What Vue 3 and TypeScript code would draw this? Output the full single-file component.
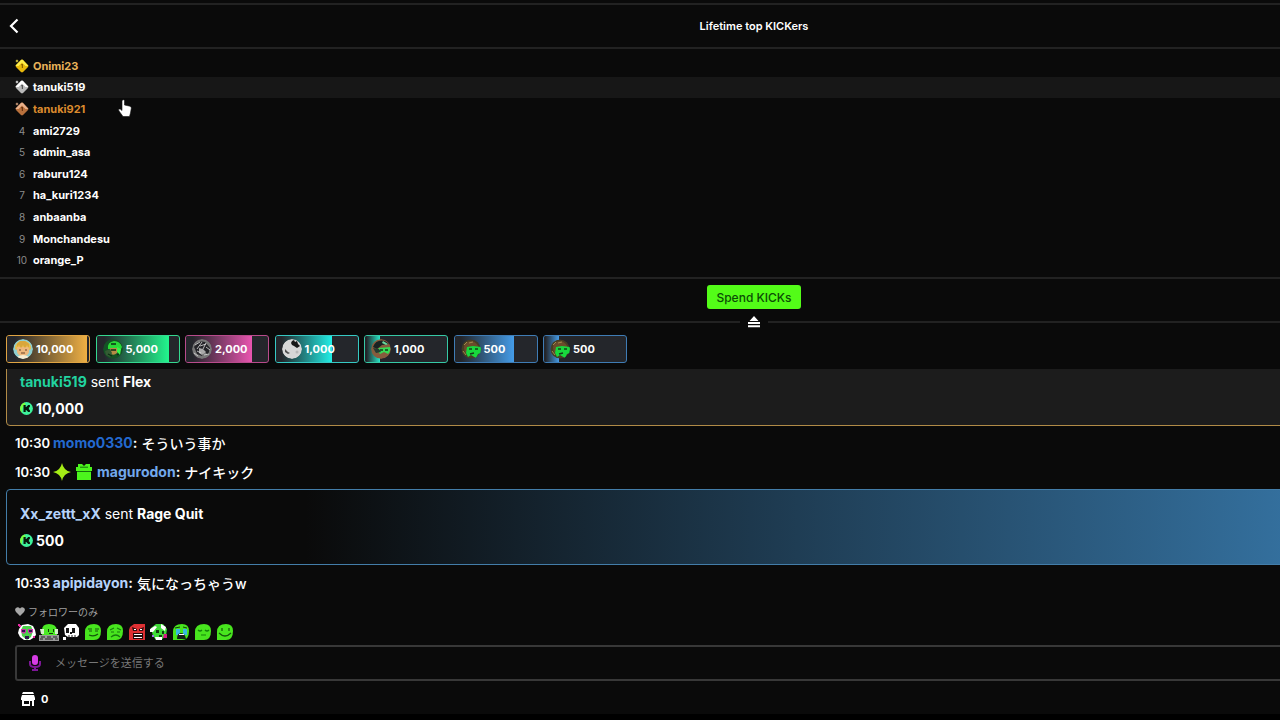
<script setup lang="ts">
import { ref } from 'vue'

interface Kicker { name: string; tone?: 'gold' | 'silver' | 'bronze' }
interface Gift { amount: string; tone: string; fill: number; avatar: string }

const kickers: Kicker[] = [
  { name: 'Onimi23', tone: 'gold' },
  { name: 'tanuki519', tone: 'silver' },
  { name: 'tanuki921', tone: 'bronze' },
  { name: 'ami2729' },
  { name: 'admin_asa' },
  { name: 'raburu124' },
  { name: 'ha_kuri1234' },
  { name: 'anbaanba' },
  { name: 'Monchandesu' },
  { name: 'orange_P' },
]

const medals: Record<string, string[]> = {
  gold: ['#ffee4a', '#e9b90c', '#8a6400'],
  silver: ['#ffffff', '#b9b9b9', '#555555'],
  bronze: ['#e9b08a', '#b8703c', '#6b3512'],
}

const gifts: Gift[] = [
  { amount: '10,000', tone: 'amber', fill: 97, avatar: 'blond' },
  { amount: '5,000', tone: 'green', fill: 88, avatar: 'visor' },
  { amount: '2,000', tone: 'pink', fill: 80, avatar: 'mono' },
  { amount: '1,000', tone: 'cyan', fill: 69, avatar: 'moon' },
  { amount: '1,000', tone: 'teal', fill: 18, avatar: 'cap' },
  { amount: '500', tone: 'blue', fill: 72, avatar: 'wild' },
  { amount: '500', tone: 'blue', fill: 18, avatar: 'wild' },
]

const emotes = ['love', 'typing', 'skull', 'smug', 'sad', 'rage', 'party', 'cry', 'calm', 'smile']
const message = ref('')
</script>

<template>
  <main class="panel">
    <header class="top">
      <button class="back" type="button" aria-label="Back">
        <svg viewBox="0 0 10 16" width="10" height="16"><path d="M8.500 1.500 2 8l6.500 6.500" fill="none" stroke="#fff" stroke-width="2.200" /></svg>
      </button>
      <h1>Lifetime top KICKers</h1>
    </header>

    <ol class="ranks">
      <li v-for="(k, i) in kickers" :key="k.name" :class="[k.tone, { hovered: i === 1 }]">
        <span class="place">
          <svg v-if="k.tone" viewBox="0 0 14 14" width="14" height="14">
            <path d="M7 .5q.6 0 1 .5l5 5q.8 1 0 2l-5 5q-1 .8-2 0L1 8Q.2 7 1 6l5-5q.5-.5 1-.5" :fill="medals[k.tone][1]" />
            <path d="M7 .5q.6 0 1 .5l5.400 6H10.500L7 3.500 3.500 7H.6Q.6 6.400 1 6l5-5q.5-.5 1-.5" :fill="medals[k.tone][0]" />
            <path d="M6.200 5h1.800v4H6.800V6.200h-.6z" :fill="medals[k.tone][2]" />
            <path d="m2 .2.6 1.200 1.200.6-1.200.6L2 3.800l-.6-1.200L.2 2l1.200-.6z" :fill="medals[k.tone][0]" />
          </svg>
          <template v-else>{{ i + 1 }}</template>
        </span>
        <a href="#">{{ k.name }}</a>
      </li>
    </ol>

    <section class="spend">
      <button class="spend-button" type="button">Spend KICKs</button>
      <div class="divider">
        <button class="collapse" type="button" aria-label="Collapse">
          <svg viewBox="0 0 14 12" width="14" height="12"><path d="M7 0 11.500 5h-9zM1 6h12v2H1zM1 9.300h12v2H1z" fill="#fff" /></svg>
        </button>
      </div>
    </section>

    <div class="gifts">
      <button v-for="(g, i) in gifts" :key="i" type="button" class="gift" :class="g.tone">
        <span class="fill" :style="{ width: g.fill + '%' }"></span>
        <svg class="avatar" viewBox="0 0 20 20" width="20" height="20">
          <g v-if="g.avatar === 'blond'">
            <circle cx="10" cy="10" r="10" fill="#8fcfd0" />
            <path d="M2 10q0-8 8-8t8 8l-2 1H4z" fill="#e9bd4c" />
            <path d="M4 8h12v5q-1 4-6 4t-6-4z" fill="#eeb87c" />
            <path d="m4 8 2-2 2 3 2-3 2 3 2-3 2 3V5l-4-3H7L4 5z" fill="#d9a63b" />
            <path d="M6 11h2M12 11h2M8 14h4" stroke="#6b4528" stroke-width="1.200" />
            <path d="M4 18q6-4 12 0-6 4-12 0" fill="#f8ebcf" />
          </g>
          <g v-else-if="g.avatar === 'visor'">
            <circle cx="10" cy="10" r="10" fill="#145225" />
            <path d="M5 10Q4 3 11 2q6 0 8 6l-2 4-6-2z" fill="#29da37" />
            <path d="M7 9h7v5q-3 3-6 1z" fill="#b58b45" />
            <path d="m2 12 5-2 2 4-2 4-4-2z" fill="#345b33" />
            <path d="m14 8 4 2-1 6-3-3z" fill="#36f449" />
            <path d="M8 5h5M8 11h5M5 15l4 2M14 16l2-1" stroke="#0a3014" stroke-width="1.300" />
          </g>
          <g v-else-if="g.avatar === 'mono'">
            <circle cx="10" cy="10" r="10" fill="#777" />
            <path d="M2 8Q6 1 13 3l5 6-2 7-4-4-2 5-5-2-2-5z" fill="#242428" />
            <path d="m7 9 4 1 3 3-4 3-3-2z" fill="#aaa" />
            <path d="M3 6 8 3M8 7l6-2M14 8l4 3M5 12l4 2M2 14l4 3M12 16l5-1M10 3l-5 7M14 4l-3 6" stroke="#ddd" stroke-width=".8" />
          </g>
          <g v-else-if="g.avatar === 'moon'">
            <circle cx="10" cy="10" r="10" fill="#d7d7d7" />
            <path d="m10 2 2-1 1 2 2-1 1 3 2 2-3 2-3-2-2-1-1-2z" fill="#171717" />
            <path d="m3 10 3 3 2 1-2 1-3-2z" fill="#4d4d4d" />
            <circle cx="15" cy="13" r="1.500" fill="#b8b8b8" />
          </g>
          <g v-else-if="g.avatar === 'cap'">
            <circle cx="10" cy="10" r="10" fill="#865c3d" />
            <path d="M2 8Q5 0 14 2l4 3-7 1-5 4z" fill="#192322" />
            <path d="m12 2 5 3-2 1-4-2z" fill="#68d79d" />
            <path d="m8 9 11-1q1 4-2 7l-4-2-4 2-3-4z" fill="#36dc55" />
            <path d="m2 9 6 1 2 3-5 1z" fill="#243b31" />
            <path d="M9 11h3M14 11h3" stroke="#143a1a" stroke-width="1.500" />
          </g>
          <g v-else>
            <circle cx="10" cy="10" r="9.500" fill="#453e24" />
            <path d="M3 9Q3 2 11 2q6 2 7 8l-5-2-5 2-4 4z" fill="#6a4b2a" />
            <path d="m6 8 6-1 8 1v6l-3 1-2 4-5-3-3 2-2-4z" fill="#18d83d" />
            <path d="M8 10h3M14 10h3M9 15l4-1" stroke="#143c18" stroke-width="1.400" />
            <path d="m3 6 3-3M8 4l4-1M2 12l3 4" stroke="#a18a4c" />
          </g>
        </svg>
        <span class="amount">{{ g.amount }}</span>
      </button>
    </div>

    <section class="chat">
      <article class="card flex">
        <p><a class="c-mint" href="#">tanuki519</a> sent <b>Flex</b></p>
        <p class="kicks">
          <svg viewBox="0 0 13 13" width="13" height="13"><circle cx="6.500" cy="6.500" r="6.400" fill="#3df29b" /><path d="M1.500 10.500a6.400 6.400 0 0 1 3-10l1 2-3 3z" fill="#7cff3e" /><path d="M3.500 3h2.200v2h1V4h1V3h2.200v2.200h-1v2.600h1V10H7.700V9h-1V8h-1v2H3.500z" fill="#06170b" /></svg>
          <b>10,000</b>
        </p>
      </article>
      <p class="line"><time>10:30</time> <a class="c-royal" href="#">momo0330</a><b>:</b> <span>そういう事か</span></p>
      <p class="line">
        <time>10:30</time>
        <svg class="badge star" viewBox="0 0 18 18" width="18" height="18"><path d="M9 0q1.500 7.500 9 9-7.500 1.500-9 9-1.500-7.500-9-9 7.500-1.500 9-9" fill="#a5ed16" /></svg>
        <svg class="badge" viewBox="0 0 16 16" width="16" height="16"><path d="M2 0h4l2 2 2-2h4v3h2v4H0V3h2zM1 8h14v8H1z" fill="#4cf51d" /><path d="M1 7.500h14M4 3.200h8" stroke="#176e0d" /></svg>
        <a class="c-sky" href="#">magurodon</a><b>:</b> <span>ナイキック</span>
      </p>
      <article class="card rage">
        <p><a class="c-ice" href="#">Xx_zettt_xX</a> sent <b>Rage Quit</b></p>
        <p class="kicks">
          <svg viewBox="0 0 13 13" width="13" height="13"><circle cx="6.500" cy="6.500" r="6.400" fill="#3df29b" /><path d="M1.500 10.500a6.400 6.400 0 0 1 3-10l1 2-3 3z" fill="#7cff3e" /><path d="M3.500 3h2.200v2h1V4h1V3h2.200v2.200h-1v2.600h1V10H7.700V9h-1V8h-1v2H3.500z" fill="#06170b" /></svg>
          <b>500</b>
        </p>
      </article>
      <p class="line"><time>10:33</time> <a class="c-ice" href="#">apipidayon</a><b>:</b> <span>気になっちゃうw</span></p>
    </section>

    <footer class="composer">
      <p class="mode">
        <svg viewBox="0 0 10 9" width="10" height="9"><path d="M5 9 1 5Q-.8 2.500 1 1 3-.7 5 1.500 7-.7 9 1q1.800 1.500 0 4z" fill="#a7a7a7" /></svg>
        フォロワーのみ
      </p>
      <div class="emotes">
        <button v-for="e in emotes" :key="e" type="button" :aria-label="e">
          <svg viewBox="0 0 20 18" width="20" height="18">
            <g v-if="e === 'love'">
              <path d="M2 6 5 2l6-1 5 2 2 4 1 5-3 3-3 2H7l-4-3-2-4z" fill="#fff" />
              <path d="M6 3h8l2 5-2 6-4 3-5-4-1-6z" fill="#4bd24a" />
              <path d="M4 6h5v3l-2 2-3-2zM11 6h5v3l-3 2-2-2z" fill="#ce32ab" />
              <path d="M5 7h3v2H5zM12 7h3v2h-3zM8 13h4v3H8z" fill="#2d174a" />
              <path d="M1 1h2v1h1v2H2V3H1zM16 13h2v2h-2z" fill="#e72aa2" />
            </g>
            <g v-else-if="e === 'typing'">
              <path d="M3 12V7q0-6 7-6t8 6v5z" fill="#4bea24" />
              <path d="M1 6h4v5H2zM16 6h3v5h-3z" fill="#d4eec9" />
              <path d="M9 6h1v3H9zM14 6h1v3h-1zM10 10h4v1h-4z" fill="#123d0a" />
              <path d="M0 12h20v6H0z" fill="#999" /><path d="M2 14h4M8 14h4M14 14h4M1 16h3M6 16h8M16 16h3" stroke="#222" />
            </g>
            <g v-else-if="e === 'skull'">
              <path d="m3 5 4-4h8l3 4v7l-2 2H7l-3-2zM2 14h3v3H2z" fill="#fff" />
              <path d="M5 5h3v5H5zM11 5h3v5h-3zM9 9h2v2H9z" fill="#171717" /><path d="M8 12v3M11 12v3M14 12v3" stroke="#222" />
            </g>
            <g v-else-if="e === 'rage'">
              <path d="M3 4 7 1h11v16H2V7z" fill="#df3033" />
              <path d="m5 4 5 2v2H6zM17 4l-5 2v2h4z" fill="#331012" /><path d="M6 10h10v6H6z" fill="#230b0c" /><path d="M7 11h8v1H7zM7 14h8v1H7z" fill="#fff" /><path d="M7 6h2v1H7zM13 6h2v1h-2z" fill="#fff" />
            </g>
            <g v-else-if="e === 'party'">
              <path d="m2 5 5-4h7l4 5-1 7-5 4H7l-3-4z" fill="#3fda37" />
              <path d="m1 6 5-3 2 1-4 5H1zM12 1l5 3-1 4-4-3zM6 14h7v3H7z" fill="#fff" />
              <path d="M7 7h3v3H7zM13 8h2v3h-2zM10 12h3v2h-3z" fill="#143b12" />
              <path d="M15 11h3v4h-4z" fill="#d51684" /><path d="M3 12h2v2H3z" fill="#9c6cf0" />
            </g>
            <g v-else>
              <path d="M2 17V9q0-8 9-8 7 0 7 7 0 9-7 9z" fill="#48e51e" />
              <g v-if="e === 'smug'" fill="none" stroke="#14540b" stroke-width="1.200"><path d="M5 6h4M12 6h4M6 8h3M12 8h3M6 12q5 2 9-1" /></g>
              <g v-else-if="e === 'sad'" fill="none" stroke="#177b0d" stroke-width="1.200"><path d="m5 7 4-2M12 5l4 2M6 9h3M12 9h3M6 14q5-4 9 0" /></g>
              <g v-else-if="e === 'cry'"><path d="M5 6h4v6H5zM12 6h4v6h-4z" fill="#38b9df" /><path d="m4 5 5-1M12 4l4 1" stroke="#12390d" /><path d="M6 16q0-6 4-6t5 6z" fill="#142019" /><path d="M8 11h5v1H8z" fill="#fff" /></g>
              <g v-else-if="e === 'calm'" fill="none" stroke="#138309" stroke-width="1.200"><path d="M5 7q2 2 4 0M12 7q2 2 4 0M8 12h5" /></g>
              <g v-else fill="none" stroke="#14540b" stroke-width="1.200"><path d="M7 5v3M14 5v3M4 10q6 6 12 0" /></g>
            </g>
          </svg>
        </button>
      </div>
      <label class="field">
        <svg viewBox="0 0 12 16" width="12" height="16"><rect x="3" width="6" height="10" rx="3" fill="#d63ce4" /><path d="M1 6v3q0 3 5 3t5-3V6M6 12v3M3 15h6" fill="none" stroke="#7e1698" stroke-width="2" /></svg>
        <input v-model="message" type="text" placeholder="メッセージを送信する" aria-label="メッセージを送信する" />
      </label>
      <button class="shop" type="button">
        <svg viewBox="0 0 14 14" width="14" height="14"><path d="M2 0h10l1 2H1zM1 3h12l1 3v2H0V6z" fill="#fff" /><path d="M1 8h2v4h5V9H3V8h10v6h-2V9H9v5H1z" fill="#fff" /></svg>
        <span>0</span>
      </button>
    </footer>

    <svg class="pointer" viewBox="0 0 14 18" width="14" height="18"><path d="M4 1.500Q5.500 0 6.500 1.500V6l5.500 1.200q1.500.4 1.300 2L12.500 14l-1 3.500H5L1 12Q0 10.500 1 10l1.200.1L4 11.500z" fill="#fff" stroke="#111" stroke-width=".6" /></svg>
  </main>
</template>

<style>
html, body { margin: 0; background: #000; overflow: hidden; }
</style>

<style scoped>
* { box-sizing: border-box; }
.panel {
  position: relative;
  display: flex;
  flex-direction: column;
  width: calc(100% + 228px);
  height: 100vh;
  padding-top: 3px;
  border-bottom: 6px solid #000;
  background: #0a0a0a;
  color: #fff;
  font-family: Inter, "Noto Sans CJK JP", sans-serif;
}
button { padding: 0; border: 0; background: none; color: inherit; font: inherit; cursor: pointer; }
a { color: inherit; text-decoration: none; }
p, h1, ol { margin: 0; padding: 0; }
svg { display: block; flex: none; }

.top {
  display: grid;
  grid-template-columns: 28px 1fr 28px;
  align-items: center;
  height: 46px;
  flex: none;
  border-top: 2px solid #222;
  border-bottom: 2px solid #222;
}
.back { display: flex; justify-content: center; }
h1 { text-align: center; font-size: 11px; font-weight: 600; }

.ranks {
  display: grid;
  grid-template-rows: repeat(10, 1fr);
  flex: none;
  height: 228px;
  padding: 6px 0;
  list-style: none;
  font-size: 11px;
  font-weight: 700;
}
.ranks li { display: flex; align-items: center; gap: 4px; padding-left: 15px; }
.ranks .hovered { background: #171717; }
.place { display: flex; justify-content: center; width: 14px; color: #8c8c8c; font-size: 10px; font-weight: 400; }
.gold a { color: #e8b25a; }
.bronze a { color: #dc8a2e; }

.spend { flex: none; display: flex; flex-direction: column; align-items: center; border-top: 2px solid #222; padding-top: 6px; }
.spend-button { height: 24px; padding: 0 9px; border-radius: 3px; background: #53fc18; color: #0b4d05; font-size: 12px; font-weight: 500; }
.divider { display: flex; align-items: center; align-self: stretch; gap: 7px; height: 26px; }
.divider::before, .divider::after { content: ""; flex: 1; height: 2px; background: #222; }

.gifts { display: flex; justify-content: space-between; flex: none; width: 621px; margin: 0 0 6px 6px; }
.gift {
  position: relative;
  display: flex;
  align-items: center;
  gap: 3px;
  width: 84px;
  height: 28px;
  padding-left: 6px;
  overflow: hidden;
  border: 1px solid var(--edge);
  border-radius: 3px;
  background: #24262b;
  font-size: 11px;
  font-weight: 700;
}
.fill { position: absolute; inset: 0 auto 0 0; background: linear-gradient(90deg, #24262b 10%, var(--tone)); }
.avatar { position: relative; border-radius: 50%; }
.amount { position: relative; }
.amber { --edge: #e0a443; --tone: #efb044; }
.green { --edge: #35d890; --tone: #22f68e; }
.pink { --edge: #b84b8c; --tone: #e955b0; }
.cyan { --edge: #36c9c4; --tone: #20eee6; }
.teal { --edge: #36c9a6; --tone: #26e8c9; }
.blue { --edge: #3f7cb5; --tone: #449ce8; }

.chat { display: flex; flex: 1; flex-direction: column; justify-content: flex-end; min-height: 0; overflow: hidden; font-size: 14px; }
.chat b { font-weight: 700; }
.chat .line { display: flex; align-items: center; flex: none; height: 29px; padding-left: 15px; white-space: pre; }
.line time { margin-right: 3px; font-size: 13px; font-weight: 600; }
.line a, .card a { font-weight: 700; }
.line span { margin-left: 4px; font-weight: 500; }
.line .badge { margin-right: 5px; }
.card { flex: none; display: flex; flex-direction: column; justify-content: center; height: 76px; margin: 3px 6px; padding-left: 13px; border: 1px solid; border-radius: 4px; line-height: 27px; }
.flex { height: 62px; margin-bottom: 2px; border-color: #b18b47; background: #1c1c1c; }
.rage { border-color: #437da9; background: linear-gradient(90deg, #0a0a0a 20%, #3d86be); }
.kicks { display: flex; align-items: center; gap: 3px; }
.c-mint { color: #22d3a0; }
.c-royal { color: #2369cf; }
.c-sky { color: #72a8ec; }
.c-ice { color: #b6d3fb; }

.composer { flex: none; display: flex; flex-direction: column; padding: 7px 6px 0 15px; }
.mode { display: flex; align-items: center; gap: 3px; height: 14px; color: #a0a0a0; font-size: 10px; }
.emotes { display: flex; gap: 2px; height: 27px; align-items: center; padding-left: 2px; }
.field { display: flex; align-items: center; gap: 12px; height: 36px; padding-left: 12px; border: 2px solid #383838; border-radius: 3px; }
.field input { flex: 1; min-width: 0; border: 0; outline: 0; background: none; color: #fff; font: inherit; font-size: 11px; }
.field input::placeholder { color: #777; opacity: 1; }
.shop { display: flex; align-items: center; align-self: flex-start; gap: 6px; height: 33px; padding: 3px 0 0 6px; font-size: 11px; font-weight: 700; }
.pointer { position: absolute; top: 99px; left: 118px; pointer-events: none; }
</style>
